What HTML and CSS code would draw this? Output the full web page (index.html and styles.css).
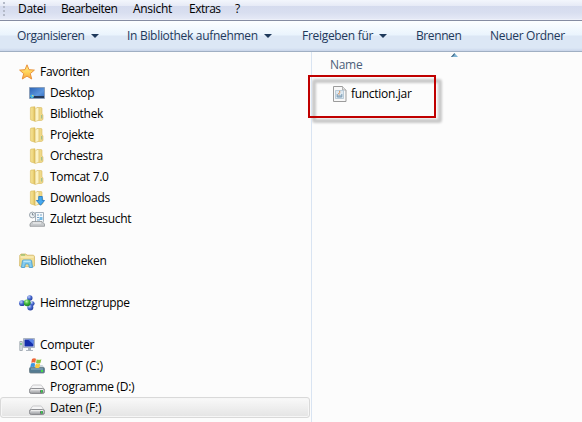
FILE: index.html
```html
<!DOCTYPE html>
<html lang="de">
<head>
<meta charset="utf-8">
<title>Daten (F:)</title>
<link rel="stylesheet" href="styles.css">
</head>
<body>
<svg class="defs" aria-hidden="true">
  <defs>
    <linearGradient id="gold" x1="0" x2="1"><stop offset="0" stop-color="#f3df8e"/><stop offset=".5" stop-color="#f0d983"/><stop offset="1" stop-color="#dcbc56"/></linearGradient>
    <linearGradient id="star" x1="0" y1="0" x2="0" y2="1"><stop offset="0" stop-color="#ffe98a"/><stop offset=".5" stop-color="#ffd65c"/><stop offset="1" stop-color="#f7a53c"/></linearGradient>
    <linearGradient id="screen" x1="0" y1="0" x2="1" y2="1"><stop offset="0" stop-color="#2b62b4"/><stop offset=".6" stop-color="#5b95dd"/><stop offset="1" stop-color="#2d66bd"/></linearGradient>
    <linearGradient id="metal" x1="0" y1="0" x2="0" y2="1"><stop offset="0" stop-color="#e3e3e5"/><stop offset=".5" stop-color="#c3c4c7"/><stop offset="1" stop-color="#96989b"/></linearGradient>
    <radialGradient id="ballBlue" cx=".35" cy=".3" r=".75"><stop offset="0" stop-color="#c3d3fa"/><stop offset=".5" stop-color="#4a6bd0"/><stop offset="1" stop-color="#1f3899"/></radialGradient>
    <radialGradient id="ballGreen" cx=".4" cy=".3" r=".75"><stop offset="0" stop-color="#c4f5ad"/><stop offset=".5" stop-color="#3eb53b"/><stop offset="1" stop-color="#187c22"/></radialGradient>
    <symbol id="folder" viewBox="0 0 16 16">
      <path d="M8 1.5h4q1 0 1 1V8l1 .8v4.7l-1.5 1H8z" fill="#efd988" stroke="#d9bb63" stroke-width=".6"/>
      <path d="M1.4 2q0-.8.8-.9L6 .8v14.4l-4-1.2q-.6-.2-.6-.8z" fill="url(#gold)" stroke="#d9ba5c" stroke-width=".6"/>
      <path d="M6.2 2.8 9 1.2l.9.6v12.4l-3.7 1.4z" fill="#fcf3c6" stroke="#dcc06c" stroke-width=".6"/>
      <path d="M12.2 9h1v3.6h-1z" fill="#8fba94"/>
    </symbol>
    <symbol id="drive" viewBox="0 0 16 16">
      <path d="M3.2 6.7Q3.6 6 4.5 6h7q.9 0 1.3.7l2.4 3.6H.8z" fill="#f5f5f6" stroke="#b4b5b8" stroke-width=".7"/>
      <rect x=".5" y="9.5" width="15" height="5" rx="1.8" fill="url(#metal)" stroke="#84868a" stroke-width=".9"/>
      <path d="M2 10.6h12" stroke="#f5f5f5" stroke-width=".8"/>
      <path d="M11 11.2h3v2.4h-3z" fill="#62666a"/>
      <rect x="12" y="11" width="1.4" height="2.6" fill="#36d34a"/>
    </symbol>
  </defs>
</svg>
<nav class="menubar">
  <span class="grip"></span>
  <span class="m-datei">Datei</span>
  <span class="m-bearbeiten">Bearbeiten</span>
  <span class="m-ansicht">Ansicht</span>
  <span class="m-extras">Extras</span>
  <span>?</span>
</nav>
<div class="toolbar">
  <span class="t-org">Organisieren<i class="caret"></i></span>
  <span class="t-bib">In Bibliothek aufnehmen<i class="caret"></i></span>
  <span class="t-share">Freigeben für<i class="caret"></i></span>
  <span class="t-burn">Brennen</span>
  <span class="t-new">Neuer Ordner</span>
</div>
<main class="content">
  <ul class="tree">
    <li class="row root"><svg viewBox="0 0 16 16"><path d="M8 .8l2 4.9 5.4.4-4.1 3.5 1.4 5.4L8 12.1l-4.7 2.9 1.4-5.4L.6 6.1 6 5.7z" fill="url(#star)" stroke="#e9923c" stroke-linejoin="round"/></svg><span>Favoriten</span></li>
    <li class="row"><svg viewBox="0 0 16 16"><path d="M.5 2.5h15v11H.5z" fill="url(#screen)" stroke="#8b9fba"/><path d="M1 11h14v2H1z" fill="#253958"/><circle cx="3" cy="11.3" r="1.9" fill="#43b6e8"/><path d="M3 10.3h1.5v1H3z" fill="#f5df65"/></svg><span>Desktop</span></li>
    <li class="row"><svg><use href="#folder"/></svg><span>Bibliothek</span></li>
    <li class="row"><svg><use href="#folder"/></svg><span>Projekte</span></li>
    <li class="row"><svg><use href="#folder"/></svg><span>Orchestra</span></li>
    <li class="row"><svg><use href="#folder"/></svg><span>Tomcat 7.0</span></li>
    <li class="row"><svg viewBox="0 0 16 16"><use href="#folder"/><path d="M9.7 6.5h3.6v4h2.3L11.5 15.3 7.4 10.5h2.3z" fill="#45a8ef" stroke="#1e75c4" stroke-width=".8"/></svg><span>Downloads</span></li>
    <li class="row"><svg viewBox="0 0 16 16"><path d="M6.5 1.5h8v9l-1 1h-7z" fill="#f4f8fb" stroke="#8e9ca8" stroke-width=".8"/><path d="M8 4h2M11 4h2M8 6.5h2M8 9h3" stroke="#79a5c8"/><path d="M10.5 6h3v3h-3z" fill="#71b8e5"/><path d="M3 10.5h10l2.5 2.5v2.3H1V13z" fill="#c7cacd" stroke="#85898d" stroke-width=".7"/><path d="M4 12h8" stroke="#f8f8f8"/><circle cx="3.4" cy="4" r="2.9" fill="#eef2f5" stroke="#929ca5" stroke-width=".9"/><path d="M3.4 2v2h1.5" fill="none" stroke="#566573" stroke-width=".7"/></svg><span>Zuletzt besucht</span></li>
    <li class="row gap"></li>
    <li class="row root"><svg viewBox="0 0 16 16"><path d="M.8 2.2 2 1h5l1 1.2h6.5l1 1V13l-1 .7h-13L.6 13z" fill="#f0dc92" stroke="#d3b867" stroke-width=".8"/><path d="M2 2h4" stroke="#79b76a"/><path d="M1.5 4h13" stroke="#fff4c6"/><path d="M2.5 14.5 3.4 8q.2-1 1.2-1h6.8q1 0 1.2 1l.9 6.5h-3.2l-.6-3.6H6.3l-.6 3.6z" fill="#87cdef" stroke="#4a9fd0" stroke-width=".9"/><path d="M4.5 8.2h7" stroke="#d2f1fc"/></svg><span>Bibliotheken</span></li>
    <li class="row gap"></li>
    <li class="row root"><svg viewBox="0 0 16 16"><path d="M3 8l5-1 3-4M8 8l5 1-2 4" fill="none" stroke="#8ca4d8" stroke-width="2"/><circle cx="10.8" cy="3" r="2.7" fill="url(#ballBlue)"/><circle cx="3" cy="8.2" r="2.9" fill="url(#ballBlue)"/><circle cx="13.2" cy="8.6" r="2.4" fill="url(#ballBlue)"/><circle cx="11.3" cy="12.5" r="3" fill="url(#ballBlue)"/><circle cx="8.2" cy="7.8" r="3.4" fill="url(#ballGreen)"/></svg><span>Heimnetzgruppe</span></li>
    <li class="row gap"></li>
    <li class="row root"><svg viewBox="0 0 16 16"><path d="M4.5 1.5h11v9h-11z" fill="#d9e0e8" stroke="#99a5b4" stroke-width=".8"/><path d="M5.5 2.5h9v7h-9z" fill="#1630ac"/><path d="M9 2.5h5.5v5z" fill="#5c86ea"/><path d="M9 11h3v2H9zM7 13h7v1H7z" fill="#aeb6c0"/><path d="M.8 4.5h2.5v9H.8z" fill="#dfe3e7" stroke="#89939e" stroke-width=".7"/><path d="M2 6v2" stroke="#39bd49"/></svg><span>Computer</span></li>
    <li class="row"><svg viewBox="0 0 16 16"><path d="M2.5 7h11l2 3h-15z" fill="#c9d5dc"/><rect x=".5" y="9.5" width="15" height="5.5" rx="1.2" fill="#547b91" stroke="#6a7b85" stroke-width=".8"/><path d="M2 11h12" stroke="#8fb2c3"/><path d="M12 12h2v2h-2z" fill="#44dc4c"/><path d="M3 .9Q5-.2 7 .8L6.3 4.7Q4.5 3.7 2.3 4.7z" fill="#ee6638"/><path d="M7.7 1.2q2 1 4.7 0L11.4 5q-2 1-4.4 0z" fill="#89c340"/><path d="M2 5.5q2-1 4.1 0L5.4 9.3q-2-1-4.1 0z" fill="#3b94df"/><path d="M6.8 5.8q2 .9 4.4 0l-.8 3.8q-2 1-4.3 0z" fill="#fac83a"/></svg><span class="l-boot">BOOT (C:)</span></li>
    <li class="row"><svg><use href="#drive"/></svg><span>Programme (D:)</span></li>
    <li class="row selected"><svg><use href="#drive"/></svg><span class="l-daten">Daten (F:)</span></li>
  </ul>
  <section class="files">
    <header class="column">Name<svg class="sort" viewBox="0 0 7 4"><path d="M0 4 3.5 0 7 4z" fill="#7fb5d6"/><path d="M0 4 3.5 0v2L1 4z" fill="#40627d"/></svg></header>
    <div class="file"><svg viewBox="0 0 16 16"><path d="M1.5.5h9L14 4v11.5H1.5z" fill="#f8f8f8" stroke="#9b9b9b"/><path d="M10.5.5V4H14" fill="#e2e2e2" stroke="#a2a2a2" stroke-width=".8"/><path d="M3.5 4.5h8v8h-8z" fill="#dce8f1" stroke="#a5bccd" stroke-width=".7"/><path d="M7.7 4.8v1.7L6.5 8l1.1 1" fill="none" stroke="#d98a4d"/><path d="M5.2 8v3h4.6V8M5.5 10h4" fill="none" stroke="#7b9bb3"/></svg><span>function.jar</span></div>
    <div class="marker"></div>
  </section>
</main>
</body>
</html>
```
FILE: styles.css
```css
*, *::before { box-sizing: border-box; }
body {
  margin: 0;
  width: 582px;
  height: 422px;
  overflow: hidden;
  display: flex;
  flex-direction: column;
  background: #fcfcfc;
  color: #000;
  font: 12px/21px "Open Sans", "Noto Sans", sans-serif;
  letter-spacing: -0.3px;
  white-space: nowrap;
}
.defs { position: absolute; width: 0; height: 0; }
.menubar {
  flex: 0 0 21px;
  display: flex;
  line-height: 17px;
  border-bottom: 1px solid #858ca2;
  background: linear-gradient(#f3f6fc 0, #e6eaf6 6px, #d5dbee 6px, #d9dff0 13px, #e5e9f6 19px, #f5f7fc 20px);
}
.grip {
  width: 2px;
  height: 14px;
  margin: 2px 13px 0 3px;
  background: repeating-linear-gradient(#b4bac8 0 2px, transparent 2px 4px);
}
.m-datei { width: 43px; }
.m-bearbeiten { width: 72px; letter-spacing: -0.53px; }
.m-ansicht { width: 56px; }
.m-extras { width: 46px; letter-spacing: -0.5px; }
.toolbar {
  flex: 0 0 31px;
  display: flex;
  padding-left: 17px;
  line-height: 30px;
  color: #1e395b;
  border-bottom: 1px solid #a0afc3;
  background: linear-gradient(#fcfeff 0, #eaf4fd 14px, #dce7f5 15px, #dce7f5 27px, #c9d5ea 30px);
}
.t-org { width: 110px; letter-spacing: -0.4px; }
.t-bib { width: 175px; letter-spacing: -0.3px; }
.t-share { width: 114px; }
.t-burn { width: 74px; letter-spacing: -0.4px; }
.caret {
  display: inline-block;
  margin-left: 6px;
  vertical-align: 2px;
  border: 4px solid transparent;
  border-top-color: #1e395b;
  border-bottom: 0;
}
.content { flex: 1; display: flex; min-height: 0; }
.tree {
  width: 312px;
  margin: 0;
  padding: 9px 1px 0 0;
  list-style: none;
  border-right: 1px solid #d9e4f2;
}
.row {
  display: flex;
  align-items: center;
  gap: 5px;
  height: 21px;
  padding-left: 29px;
}
.row svg, .file svg { width: 16px; height: 16px; flex: none; }
.root { padding-left: 19px; }
.l-boot { letter-spacing: -0.1px; }
.l-daten { letter-spacing: -0.2px; }
.selected {
  padding-left: 28px;
  border: 1px solid #d9d9d9;
  border-radius: 3px;
  background: linear-gradient(#f9f9f9, #e4e4e4);
  box-shadow: inset 0 0 0 1px #f6f6f6;
}
.files { position: relative; flex: 1; }
.column { position: relative; height: 27px; padding-left: 18px; line-height: 26px; color: #4c607a; }
.sort { position: absolute; left: 139px; top: 1px; width: 7px; height: 4px; }
.file { display: flex; gap: 4px; align-items: center; height: 29px; padding-left: 20px; }
.file svg { margin-right: -1px; }
.marker {
  position: absolute;
  left: -4px;
  top: 23px;
  width: 128px;
  height: 43px;
  border: 2px solid #c00000;
}
.marker::before {
  content: "";
  position: absolute;
  z-index: -1;
  left: 2px;
  top: 2px;
  width: 130px;
  height: 44px;
  border: 4px solid rgba(0, 0, 0, .2);
  border-radius: 3px;
  filter: blur(1px);
}
```
